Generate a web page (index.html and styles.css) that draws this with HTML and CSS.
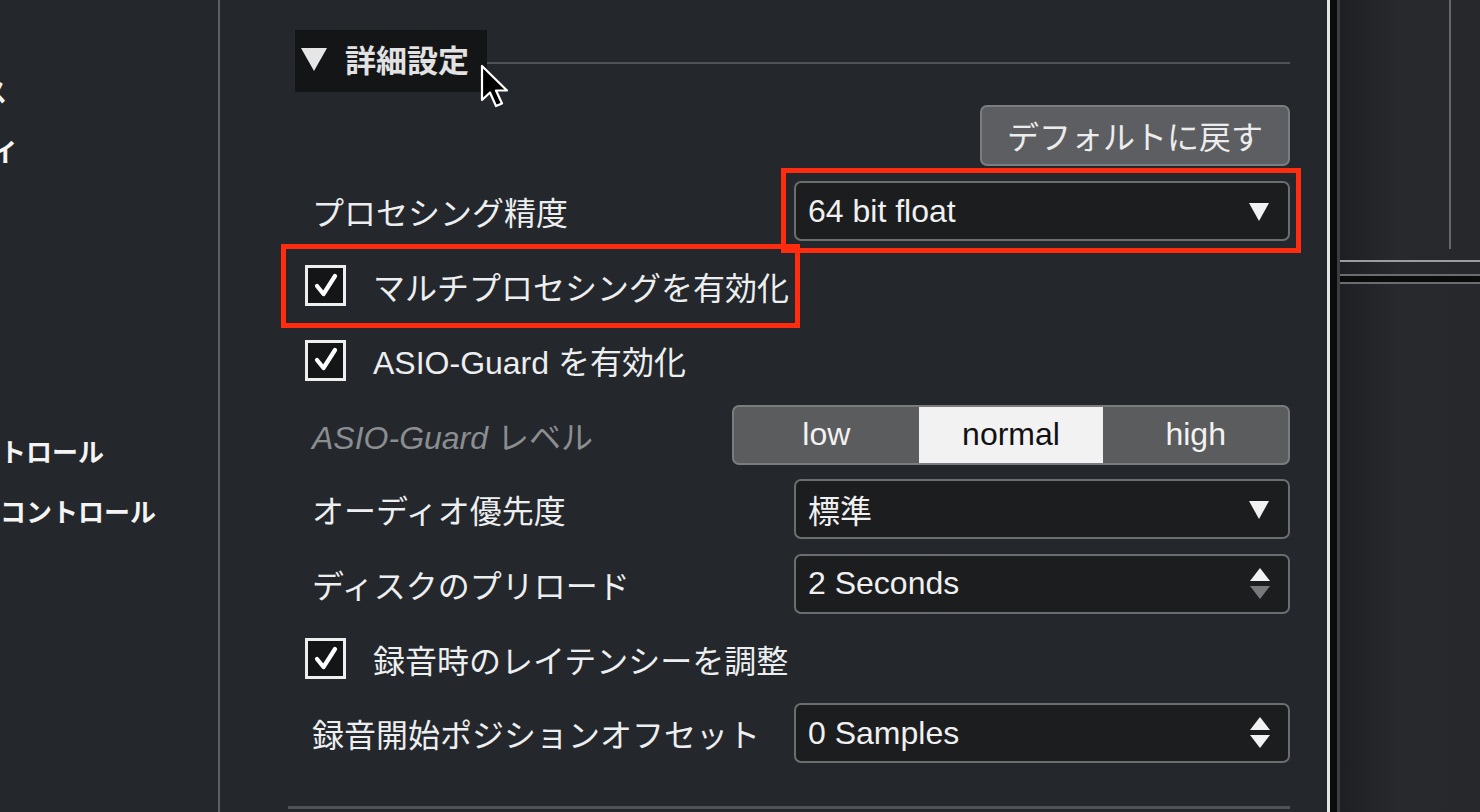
FILE: index.html
```html
<!DOCTYPE html>
<html lang="ja">
<head>
  <meta charset="UTF-8">
  <meta name="viewport" content="width=device-width, initial-scale=1.0">
  <title>スタジオ設定</title>
  <link rel="stylesheet" href="styles.css">
</head>
<body>
  <div class="app">
    <nav class="sidebar">
      <div class="nav-list">
        <div class="nav-item cut-device">ス</div>
        <div class="nav-item cut-display">イ</div>
        <div class="nav-item"></div>
        <div class="nav-item"></div>
        <div class="nav-item"></div>
        <div class="nav-item"></div>
        <div class="nav-item">トロール</div>
        <div class="nav-item">コントロール</div>
      </div>
    </nav>

    <main class="settings">
      <div class="section-head">
        <div class="section-toggle">
          <svg class="toggle-caret" width="28" height="26" viewBox="0 0 28 26"><path d="M1 2 L27 2 L14 25 Z" fill="#e6e6e6"/></svg>
          詳細設定
        </div>
        <div class="section-rule"></div>
        <svg class="pointer" width="34" height="48" viewBox="0 0 34 48">
          <path d="M3 2 L3 36 L11 28.5 L17 42 L23 39.5 L17 26.5 L28 26.5 Z" fill="#000" stroke="#fff" stroke-width="2.2" stroke-linejoin="round"/>
        </svg>
      </div>

      <div class="reset-row">
        <button class="btn">デフォルトに戻す</button>
      </div>

      <div class="rows">
        <div class="row">
          <span class="row-label">プロセシング精度</span>
          <div class="mark-box">
            <div class="select">
              <span>64 bit float</span>
              <svg class="caret" width="22" height="20" viewBox="0 0 22 20"><path d="M1 1 L21 1 L11 19 Z" fill="#f2f2f2"/></svg>
            </div>
          </div>
        </div>

        <div class="row">
          <label class="check-row marked-row">
            <span class="checkbox"><svg width="30" height="30" viewBox="0 0 30 30"><path d="M6 15 L12.5 23 L24 5" fill="none" stroke="#fff" stroke-width="4.2" stroke-linecap="round" stroke-linejoin="round"/></svg></span>
            マルチプロセシングを有効化
          </label>
        </div>

        <div class="row">
          <label class="check-row">
            <span class="checkbox"><svg width="30" height="30" viewBox="0 0 30 30"><path d="M6 15 L12.5 23 L24 5" fill="none" stroke="#fff" stroke-width="4.2" stroke-linecap="round" stroke-linejoin="round"/></svg></span>
            ASIO-Guard を有効化
          </label>
        </div>

        <div class="row">
          <span class="row-label muted"><i>ASIO-Guard</i> レベル</span>
          <div class="segmented">
            <span class="segment">low</span>
            <span class="segment active">normal</span>
            <span class="segment">high</span>
          </div>
        </div>

        <div class="row">
          <span class="row-label">オーディオ優先度</span>
          <div class="select">
            <span>標準</span>
            <svg class="caret" width="22" height="20" viewBox="0 0 22 20"><path d="M1 1 L21 1 L11 19 Z" fill="#f2f2f2"/></svg>
          </div>
        </div>

        <div class="row">
          <span class="row-label">ディスクのプリロード</span>
          <div class="select">
            <span>2 Seconds</span>
            <svg class="stepper" width="22" height="36" viewBox="0 0 22 36">
              <path d="M11 2 L21 15 L1 15 Z" fill="#f2f2f2"/>
              <path d="M1 20 L21 20 L11 33 Z" fill="#77797c"/>
            </svg>
          </div>
        </div>

        <div class="row">
          <label class="check-row">
            <span class="checkbox"><svg width="30" height="30" viewBox="0 0 30 30"><path d="M6 15 L12.5 23 L24 5" fill="none" stroke="#fff" stroke-width="4.2" stroke-linecap="round" stroke-linejoin="round"/></svg></span>
            録音時のレイテンシーを調整
          </label>
        </div>

        <div class="row">
          <span class="row-label">録音開始ポジションオフセット</span>
          <div class="select">
            <span>0 Samples</span>
            <svg class="stepper" width="22" height="36" viewBox="0 0 22 36">
              <path d="M11 2 L21 15 L1 15 Z" fill="#f2f2f2"/>
              <path d="M1 20 L21 20 L11 33 Z" fill="#f2f2f2"/>
            </svg>
          </div>
        </div>
      </div>

      <div class="section-end"></div>
    </main>

    <div class="splitter"></div>

    <aside class="side-pane">
      <div class="pane-top"><div class="pane-rule"></div></div>
      <div class="pane-sep"></div>
      <div class="pane-bottom"></div>
    </aside>
  </div>
</body>
</html>
```

FILE: styles.css
```css
body {
  margin: 0;
  padding: 0;
  font-family: "Liberation Sans", "Noto Sans CJK JP", sans-serif;
  background: #24272b;
  color: #eceeef;
  overflow: hidden;
}

.app {
  display: flex;
  height: 812px;
}

/* left category list */
.sidebar {
  width: 218px;
  flex-shrink: 0;
  border-right: 2px solid #5b5f63;
  overflow: hidden;
}

.nav-list {
  padding-top: 63px;
}

.nav-item {
  height: 60px;
  line-height: 60px;
  font-size: 26px;
  font-weight: bold;
  color: #f4f4f4;
  white-space: nowrap;
}

.nav-item.cut-device {
  margin-left: -19px;
}

.nav-item.cut-display {
  margin-left: -9px;
}

/* settings panel */
.settings {
  flex: 1;
  padding: 30px 37px 0 68px;
}

.section-head {
  position: relative;
  display: flex;
  align-items: center;
  height: 62px;
}

.section-toggle {
  margin-left: 7px;
  height: 62px;
  width: 192px;
  box-sizing: border-box;
  padding: 0 0 6px 5px;
  display: flex;
  align-items: center;
  background: #141517;
  color: #e2e2e2;
  font-size: 31px;
  font-weight: bold;
}

.toggle-caret {
  margin-right: 17px;
  margin-top: 2px;
}

.section-rule {
  flex: 1;
  height: 2px;
  background: #4f5357;
  margin-top: 4px;
}

.pointer {
  position: absolute;
  left: 191px;
  top: 34px;
}

.reset-row {
  display: flex;
  justify-content: flex-end;
  margin-top: 13px;
}

.btn {
  width: 310px;
  height: 61px;
  border: 2px solid #7b7d80;
  border-radius: 7px;
  background: #5c5e61;
  color: #ececec;
  font-family: inherit;
  font-size: 32px;
  padding: 0 0 2px;
}

.rows {
  display: flex;
  flex-direction: column;
  gap: 14.6px;
  margin-top: 15px;
}

.row {
  height: 60px;
  display: flex;
  align-items: center;
  justify-content: space-between;
  font-size: 32px;
}

.row-label {
  padding-left: 24px;
  white-space: nowrap;
}

.row-label.muted {
  color: #8b8e91;
}

.select {
  width: 496px;
  height: 60px;
  box-sizing: border-box;
  border: 2px solid #6b6e71;
  border-radius: 7px;
  background: #1c1d1f;
  color: #f0f0f0;
  display: flex;
  align-items: center;
  justify-content: space-between;
  padding: 0 18px 0 12px;
  font-size: 32px;
}

.caret {
  margin-top: 2px;
}

.stepper {
  margin-right: -1px;
}

/* red call-out frames */
.mark-box {
  border: 5px solid #ff2c10;
  padding: 8px 6px 7px 8px;
  margin: -13px -11px -12px -13px;
}

.check-row {
  display: flex;
  align-items: center;
  padding-left: 17px;
  gap: 27px;
  white-space: nowrap;
}

.marked-row {
  margin-left: -7px;
  margin-top: 0;
  padding: 0 6px 0 19px;
  height: 74px;
  border: 5px solid #ff2c10;
}

.checkbox {
  width: 41px;
  height: 41px;
  box-sizing: border-box;
  border: 3px solid #eeeeee;
  background: #141516;
  display: flex;
  align-items: center;
  justify-content: center;
}

.segmented {
  width: 558px;
  height: 60px;
  box-sizing: border-box;
  border: 2px solid #7a7c7f;
  border-radius: 7px;
  overflow: hidden;
  display: flex;
  background: #5b5c5e;
}

.segment {
  flex: 1;
  display: flex;
  align-items: center;
  justify-content: center;
  color: #f2f2f2;
  font-size: 32px;
}

.segment.active {
  background: #f2f2f2;
  color: #111;
}

.section-end {
  height: 3px;
  background: #4f5357;
  margin-top: 43px;
}

/* window divider */
.splitter {
  width: 7px;
  flex-shrink: 0;
  border-left: 3px solid #e4e4e4;
  border-right: 3px solid #3b3d40;
  background: #0b0b0c;
}

/* right pane */
.side-pane {
  width: 140px;
  flex-shrink: 0;
  display: flex;
  flex-direction: column;
  background: linear-gradient(90deg, #1d1f22, #27292d 40%, #26282c);
}

.pane-top {
  height: 262px;
  border-bottom: 2px solid #9a9c9e;
  display: flex;
  justify-content: flex-end;
  padding-right: 29px;
  box-sizing: border-box;
}

.pane-rule {
  width: 2px;
  height: 249px;
  background: #65686b;
}

.pane-sep {
  height: 6px;
  margin-top: 12px;
  border-top: 2px solid #6a6c6f;
  border-bottom: 2px solid #6a6c6f;
  background: #0b0b0c;
}

.pane-bottom {
  flex: 1;
}
```
